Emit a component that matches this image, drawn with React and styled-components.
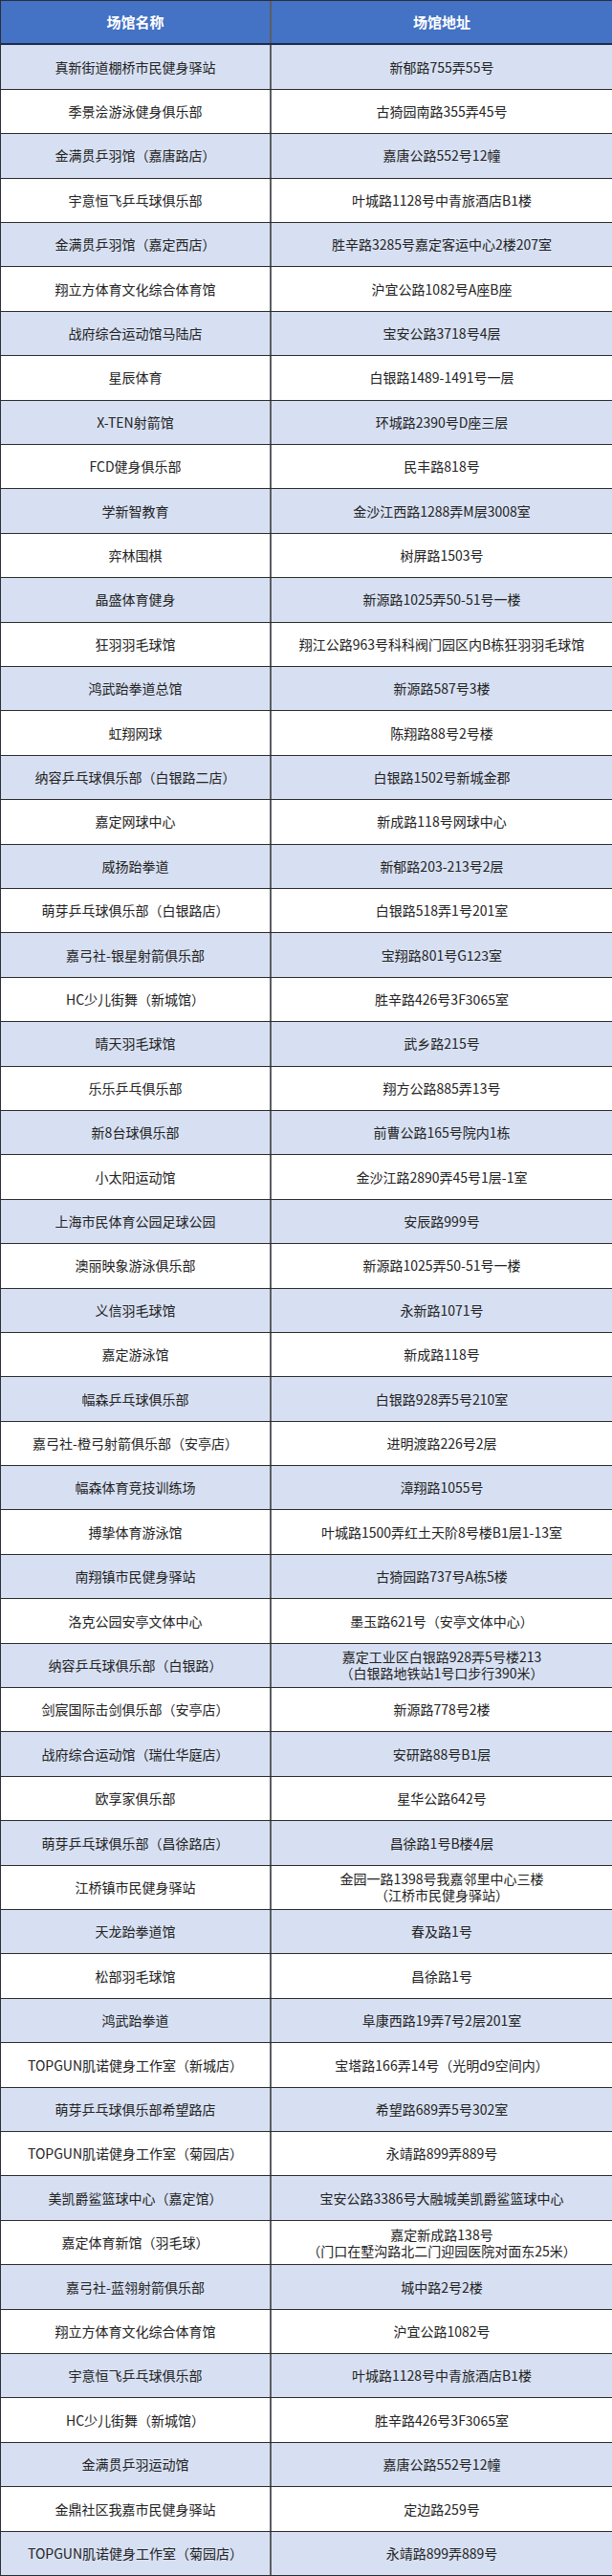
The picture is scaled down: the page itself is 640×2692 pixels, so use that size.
import React from 'react';
import styled, { createGlobalStyle } from 'styled-components';

const GlobalStyle = createGlobalStyle`
  html, body {
    margin: 0;
    padding: 0;
    background: #fff;
  }
  body {
    font-family: "Noto Sans CJK SC", "Noto Sans", sans-serif;
  }
`;

const venues = [
  ['真新街道棚桥市民健身驿站', '新郁路755弄55号'],
  ['季景浍游泳健身俱乐部', '古猗园南路355弄45号'],
  ['金满贯乒羽馆（嘉唐路店）', '嘉唐公路552号12幢'],
  ['宇意恒飞乒乓球俱乐部', '叶城路1128号中青旅酒店B1楼'],
  ['金满贯乒羽馆（嘉定西店）', '胜辛路3285号嘉定客运中心2楼207室'],
  ['翔立方体育文化综合体育馆', '沪宜公路1082号A座B座'],
  ['战府综合运动馆马陆店', '宝安公路3718号4层'],
  ['星辰体育', '白银路1489-1491号一层'],
  ['X-TEN射箭馆', '环城路2390号D座三层'],
  ['FCD健身俱乐部', '民丰路818号'],
  ['学新智教育', '金沙江西路1288弄M层3008室'],
  ['弈林围棋', '树屏路1503号'],
  ['晶盛体育健身', '新源路1025弄50-51号一楼'],
  ['狂羽羽毛球馆', '翔江公路963号科科阀门园区内B栋狂羽羽毛球馆'],
  ['鸿武跆拳道总馆', '新源路587号3楼'],
  ['虹翔网球', '陈翔路88号2号楼'],
  ['纳容乒乓球俱乐部（白银路二店）', '白银路1502号新城金郡'],
  ['嘉定网球中心', '新成路118号网球中心'],
  ['威扬跆拳道', '新郁路203-213号2层'],
  ['萌芽乒乓球俱乐部（白银路店）', '白银路518弄1号201室'],
  ['嘉弓社-银星射箭俱乐部', '宝翔路801号G123室'],
  ['HC少儿街舞（新城馆）', '胜辛路426号3F3065室'],
  ['晴天羽毛球馆', '武乡路215号'],
  ['乐乐乒乓俱乐部', '翔方公路885弄13号'],
  ['新8台球俱乐部', '前曹公路165号院内1栋'],
  ['小太阳运动馆', '金沙江路2890弄45号1层-1室'],
  ['上海市民体育公园足球公园', '安辰路999号'],
  ['澳丽映象游泳俱乐部', '新源路1025弄50-51号一楼'],
  ['义信羽毛球馆', '永新路1071号'],
  ['嘉定游泳馆', '新成路118号'],
  ['幅森乒乓球俱乐部', '白银路928弄5号210室'],
  ['嘉弓社-橙弓射箭俱乐部（安亭店）', '进明渡路226号2层'],
  ['幅森体育竞技训练场', '漳翔路1055号'],
  ['搏挚体育游泳馆', '叶城路1500弄红土天阶8号楼B1层1-13室'],
  ['南翔镇市民健身驿站', '古猗园路737号A栋5楼'],
  ['洛克公园安亭文体中心', '墨玉路621号（安亭文体中心）'],
  ['纳容乒乓球俱乐部（白银路）', ['嘉定工业区白银路928弄5号楼213', '（白银路地铁站1号口步行390米）']],
  ['剑宸国际击剑俱乐部（安亭店）', '新源路778号2楼'],
  ['战府综合运动馆（瑞仕华庭店）', '安研路88号B1层'],
  ['欧享家俱乐部', '星华公路642号'],
  ['萌芽乒乓球俱乐部（昌徐路店）', '昌徐路1号B楼4层'],
  ['江桥镇市民健身驿站', ['金园一路1398号我嘉邻里中心三楼', '（江桥市民健身驿站）']],
  ['天龙跆拳道馆', '春及路1号'],
  ['松部羽毛球馆', '昌徐路1号'],
  ['鸿武跆拳道', '阜康西路19弄7号2层201室'],
  ['TOPGUN肌诺健身工作室（新城店）', '宝塔路166弄14号（光明d9空间内）'],
  ['萌芽乒乓球俱乐部希望路店', '希望路689弄5号302室'],
  ['TOPGUN肌诺健身工作室（菊园店）', '永靖路899弄889号'],
  ['美凯爵鲨篮球中心（嘉定馆）', '宝安公路3386号大融城美凯爵鲨篮球中心'],
  ['嘉定体育新馆（羽毛球）', ['嘉定新成路138号', '（门口在墅沟路北二门迎园医院对面东25米）']],
  ['嘉弓社-蓝翎射箭俱乐部', '城中路2号2楼'],
  ['翔立方体育文化综合体育馆', '沪宜公路1082号'],
  ['宇意恒飞乒乓球俱乐部', '叶城路1128号中青旅酒店B1楼'],
  ['HC少儿街舞（新城馆）', '胜辛路426号3F3065室'],
  ['金满贯乒羽运动馆', '嘉唐公路552号12幢'],
  ['金鼎社区我嘉市民健身驿站', '定边路259号'],
  ['TOPGUN肌诺健身工作室（菊园店）', '永靖路899弄889号'],
];

const App = () => {
  return (
    <>
      <GlobalStyle />
      <Table $rows={venues.length + 1}>
        <Row $kind='head'>
          <Cell $kind='head'>场馆名称</Cell>
          <Cell $kind='head'>场馆地址</Cell>
        </Row>
        {venues.map(([name, address], i) => (
          <Row key={i} $kind={i % 2 === 0 ? 'tint' : 'plain'}>
            <Cell>{name}</Cell>
            <Cell>
              {Array.isArray(address)
                ? address.map((line) => <Line key={line}>{line}</Line>)
                : address}
            </Cell>
          </Row>
        ))}
      </Table>
    </>
  );
};

const rowBg = {
  head: '#4472c4',
  tint: '#d7e0f2',
  plain: '#ffffff',
};

const Table = styled.div`
  display: grid;
  grid-template-rows: repeat(${(p) => p.$rows}, 1fr);
  width: 640px;
  height: 2692px;
  box-sizing: border-box;
  border-top: 1px solid #2a2f3a;
  border-left: 1px solid #2a2f3a;
`;

const Row = styled.div`
  display: grid;
  grid-template-columns: 283px 1fr;
  background: ${(p) => rowBg[p.$kind]};
  border-bottom: ${(p) => (p.$kind === 'head' ? '2px solid #1f2c48' : '1px solid #2b2b2b')};
  min-height: 0;
`;

const Cell = styled.div`
  display: flex;
  flex-direction: column;
  align-items: center;
  justify-content: center;
  text-align: center;
  font-size: ${(p) => (p.$kind === 'head' ? '15px' : '14px')};
  font-weight: ${(p) => (p.$kind === 'head' ? 700 : 400)};
  color: ${(p) => (p.$kind === 'head' ? '#ffffff' : '#222222')};
  line-height: 1.2;
  white-space: nowrap;
  overflow: hidden;

  &:first-child {
    border-right: 2px solid #5b5e63;
  }
`;

const Line = styled.span`
  display: block;
  line-height: 17px;
`;

export default App;
